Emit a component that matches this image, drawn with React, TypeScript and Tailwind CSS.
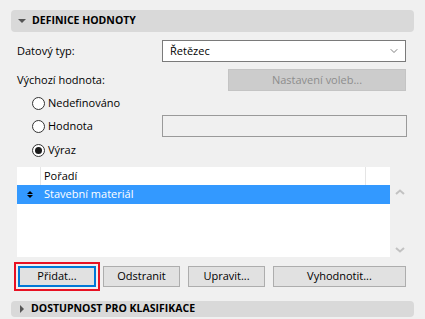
import { ChevronDown } from 'lucide-react';

const font = { fontFamily: '"Open Sans", "Liberation Sans", sans-serif' };

function Radio({ checked, label }: { checked?: boolean; label: string }) {
  return (
    <div className="flex items-center h-[20px] pl-[32px]">
      <span className="w-[13px] h-[13px] rounded-full border border-[#333333] bg-white flex items-center justify-center">
        {checked && <span className="w-[7px] h-[7px] rounded-full bg-[#1a1a1a]" />}
      </span>
      <span className="ml-[3px] text-[11px] text-black">{label}</span>
    </div>
  );
}

function Btn({ label, w }: { label: string; w: string }) {
  return (
    <div className={`${w} h-[21px] border border-[#adadad] bg-[#e1e1e1] flex items-center justify-center text-[11px] text-black`}>
      {label}
    </div>
  );
}

export default function App() {
  return (
    <div className="w-[425px] h-[319px] bg-[#f0f0f0] overflow-hidden flex flex-col" style={font}>
      {/* section header */}
      <div className="mt-[10px] mx-[11px] h-[22px] rounded-[4px] bg-[#d9d9d9] flex items-center pl-[7px] shrink-0">
        <span className="w-0 h-0 border-l-[4px] border-r-[4px] border-t-[4px] border-l-transparent border-r-transparent border-t-[#555555]" />
        <span className="ml-[6px] text-[10.5px] font-bold text-black">DEFINICE HODNOTY</span>
      </div>

      {/* data type */}
      <div className="mt-[8px] flex items-center h-[22px] shrink-0">
        <span className="pl-[17px] w-[162px] text-[11px] text-black">Datový typ:</span>
        <div className="w-[244px] h-[22px] border border-[#7a7a7a] bg-white flex items-center justify-between pl-[7px] pr-[5px]">
          <span className="text-[11px] text-black">Řetězec</span>
          <ChevronDown size={12} strokeWidth={1.5} className="text-[#555555]" />
        </div>
      </div>

      {/* default value */}
      <div className="mt-[7px] flex items-center h-[22px] shrink-0">
        <span className="pl-[17px] w-[228px] text-[11px] text-black">Výchozí hodnota:</span>
        <div className="w-[178px] h-[22px] border border-[#c4c4c4] bg-[#cccccc] flex items-center justify-center text-[11px] text-[#8c8c8c]">
          Nastavení voleb...
        </div>
      </div>

      <div className="mt-[2px]">
        <Radio label="Nedefinováno" />
      </div>
      <div className="mt-[2px] flex items-center h-[22px] shrink-0">
        <div className="w-[162px]">
          <Radio label="Hodnota" />
        </div>
        <div className="w-[245px] h-[22px] border border-[#9a9a9a] bg-[#f0f0f0]" />
      </div>
      <div className="mt-[3px]">
        <Radio checked label="Výraz" />
      </div>

      {/* list */}
      <div className="mt-[7px] flex shrink-0">
        <div className="ml-[17px] w-[373px] h-[90px] bg-white flex flex-col">
          <div className="h-[18px] flex text-[11px] text-black">
            <div className="w-[24px] border-r border-[#e5e5e5]" />
            <div className="flex-1 pl-[3px] flex items-center">Pořadí</div>
            <div className="w-[25px] border-l border-[#e5e5e5]" />
          </div>
          <div className="h-[19px] bg-[#3399ff] flex items-center text-[11px] text-white">
            <div className="w-[24px] flex flex-col items-center gap-[1px] pl-[1px]">
              <span className="w-0 h-0 border-l-[3px] border-r-[3px] border-b-[3px] border-l-transparent border-r-transparent border-b-black" />
              <span className="w-0 h-0 border-l-[3px] border-r-[3px] border-t-[3px] border-l-transparent border-r-transparent border-t-black" />
            </div>
            <span className="pl-[3px]">Stavební materiál</span>
          </div>
        </div>
        <div className="ml-[3px] w-[14px] flex flex-col items-center justify-between pt-[22px] pb-[4px]">
          <svg width="10" height="6" viewBox="0 0 10 6">
            <path d="M1 5 L5 1.5 L9 5" fill="none" stroke="#c2c2c2" strokeWidth="2" />
          </svg>
          <svg width="10" height="6" viewBox="0 0 10 6">
            <path d="M1 1 L5 4.5 L9 1" fill="none" stroke="#c2c2c2" strokeWidth="2" />
          </svg>
        </div>
      </div>

      {/* buttons */}
      <div className="mt-[5px] flex items-center pl-[14px] shrink-0">
        <div className="w-[86px] h-[29px] border-2 border-[#e81123] p-[2px]">
          <div className="w-[78px] h-[21px] border-2 border-[#0078d7] bg-[#e1e1e1] flex items-center justify-center text-[11px] text-black">
            Přidat...
          </div>
        </div>
        <div className="ml-[3px]">
          <Btn label="Odstranit" w="w-[77px]" />
        </div>
        <div className="ml-[8px]">
          <Btn label="Upravit..." w="w-[77px]" />
        </div>
        <div className="ml-[8px]">
          <Btn label="Vyhodnotit..." w="w-[133px]" />
        </div>
      </div>

      {/* collapsed section */}
      <div className="mt-[10px] mx-[11px] h-[16px] rounded-[4px] bg-[#d9d9d9] flex items-center pl-[9px] shrink-0">
        <span className="w-0 h-0 border-t-[4px] border-b-[4px] border-l-[4px] border-t-transparent border-b-transparent border-l-[#555555]" />
        <span className="ml-[7px] text-[10.5px] font-bold text-black">DOSTUPNOST PRO KLASIFIKACE</span>
      </div>
    </div>
  );
}
